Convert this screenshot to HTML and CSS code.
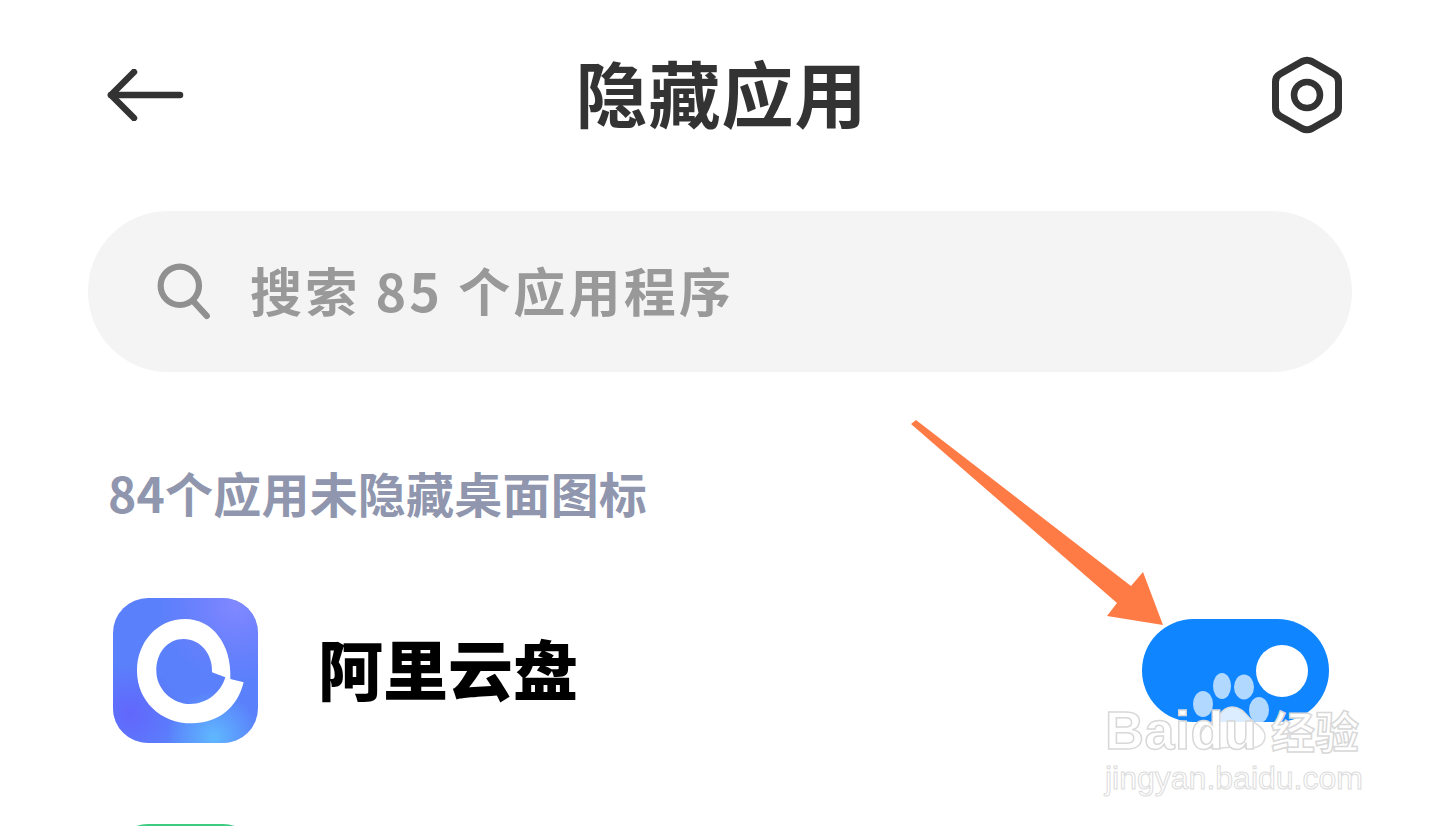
FILE: index.html
```html
<!DOCTYPE html>
<html lang="zh-CN">
<head>
  <meta charset="UTF-8" />
  <meta name="viewport" content="width=device-width, initial-scale=1.0" />
  <title>隐藏应用</title>
  <link rel="stylesheet" href="styles.css">
</head>
<body>
  <div class="page">
    <!-- Header -->
    <header class="header">
      <svg class="icon-back" viewBox="0 0 80 52" fill="none" stroke="#333" stroke-width="6.5" stroke-linecap="round" stroke-linejoin="round">
        <path d="M28 3 L5 26 L28 49"/>
        <path d="M5 26 H74"/>
      </svg>
      <h1 class="title">隐藏应用</h1>
      <svg class="icon-settings" viewBox="0 0 72 78" fill="none" stroke="#333" stroke-width="7" stroke-linejoin="round">
        <path d="M31 5.5 Q36 3 41 5.5 L63 18 Q67.500 20.500 67.500 26 V52 Q67.500 57.500 63 60 L41 72.500 Q36 75 31 72.500 L9 60 Q4.500 57.500 4.500 52 V26 Q4.500 20.500 9 18 Z"/>
        <circle cx="36" cy="39" r="13" stroke-width="6.500"/>
      </svg>
    </header>

    <!-- Search -->
    <div class="search">
      <svg class="icon-search" viewBox="0 0 54 56" fill="none" stroke="#909090" stroke-width="6" stroke-linecap="round">
        <circle cx="22" cy="23" r="18.500"/>
        <path d="M36 39 L48 52"/>
      </svg>
      <span class="search-text">搜索 85 个应用程序</span>
    </div>

    <p class="section-label">84个应用未隐藏桌面图标</p>

    <!-- App list -->
    <ul class="app-list">
      <li class="app-row">
        <svg class="app-icon" viewBox="68 52 435 435">
          <defs>
            <radialGradient id="iconCorner" gradientUnits="userSpaceOnUse" cx="440" cy="70" r="240">
              <stop offset="0" stop-color="#8189ff"/>
              <stop offset="1" stop-color="#7a7dff" stop-opacity="0"/>
            </radialGradient>
            <radialGradient id="iconLeft" gradientUnits="userSpaceOnUse" cx="120" cy="400" r="150">
              <stop offset="0" stop-color="#6266fc"/>
              <stop offset="1" stop-color="#6266fc" stop-opacity="0"/>
            </radialGradient>
            <radialGradient id="iconBottom" gradientUnits="userSpaceOnUse" cx="370" cy="470" r="140">
              <stop offset="0" stop-color="#5fb8ff"/>
              <stop offset="1" stop-color="#5fb8ff" stop-opacity="0"/>
            </radialGradient>
          </defs>
          <rect x="68" y="52" width="435" height="435" rx="105" fill="#5a80fb"/>
          <rect x="68" y="52" width="435" height="435" rx="105" fill="url(#iconCorner)"/>
          <rect x="68" y="52" width="435" height="435" rx="105" fill="url(#iconLeft)"/>
          <rect x="68" y="52" width="435" height="435" rx="105" fill="url(#iconBottom)"/>
          <path fill="#fff" fill-rule="evenodd" d="M420 295 C425 190 365 115 285 115 C200 115 140 185 140 270 C140 360 210 428 305 428 C380 428 440 385 460 305 Z M365 275 C368 220 330 175 280 175 C232 175 198 215 198 270 C198 325 245 370 300 370 C350 370 392 335 405 290 Z"/>
        </svg>
        <span class="app-name">阿里云盘</span>
        <div class="toggle"><span class="toggle-knob"></span></div>
      </li>
      <li class="app-row">
        <div class="app-icon app-icon-green"></div>
      </li>
    </ul>
  </div>

  <!-- Annotation arrow -->
  <svg class="arrow" viewBox="0 0 1440 826">
    <polygon fill="#ff7b45" points="911,424 916,420 1131,586 1143,572 1163,625 1107,616 1117,603"/>
  </svg>

  <!-- Watermark -->
  <div class="watermark">
    <svg class="wm-paw" viewBox="0 0 90 80">
      <ellipse cx="10" cy="25" rx="10" ry="13"/>
      <ellipse cx="29" cy="7" rx="9" ry="13"/>
      <ellipse cx="51" cy="8" rx="10" ry="12.500"/>
      <ellipse cx="66" cy="31" rx="10" ry="13"/>
      <path class="wm-pad" d="M39 28 C50 28 54 38 62 44 C72 50 75 58 69 65 C62 72 50 67 39 68 C28 69 16 72 10 64 C4 56 10 48 19 43 C27 38 29 28 39 28 Z"/>
    </svg>
    <div class="wm-top">
      <span class="wm-baidu">Baidu</span>
      <span class="wm-cn">经验</span>
    </div>
    <div class="wm-url">jingyan.baidu.com</div>
  </div>
</body>
</html>
```

FILE: styles.css
```css
/* Base styling */
html, body {
  margin: 0;
  padding: 0;
  height: 826px;
  overflow: hidden;
  background: #fff;
}
body {
  position: relative;
  font-family: "Noto Sans CJK SC", "Noto Sans", sans-serif;
}
.page {
  padding: 0 88px;
  height: 826px;
  overflow: hidden;
}

/* Header */
.header {
  display: flex;
  align-items: center;
  justify-content: space-between;
  height: 190px;
  padding: 0 9px 0 18px;
}
.icon-back {
  display: block;
  width: 80px;
  height: 52px;
}
.title {
  margin: -8px 0 0 -14px;
  font-size: 72px;
  line-height: 80px;
  letter-spacing: 1px;
  font-weight: 700;
  color: #333;
}
.icon-settings {
  display: block;
  width: 72px;
  height: 78px;
}

/* Search */
.search {
  display: flex;
  align-items: center;
  height: 161px;
  margin-top: 21px;
  padding-left: 69px;
  background: #f4f4f4;
  border-radius: 80px;
}
.icon-search {
  width: 56px;
  height: 58px;
  margin: -2px 37px 0 0;
}
.search-text {
  font-size: 52px;
  line-height: 70px;
  margin-top: -3px;
  letter-spacing: 3.200px;
  font-weight: 700;
  color: #999;
  white-space: pre;
}

/* List */
.section-label {
  margin: 89px 0 0 20px;
  font-size: 48px;
  line-height: 62px;
  letter-spacing: 0.2px;
  font-weight: 700;
  color: #8f96ae;
}
.app-list {
  list-style: none;
  margin: 75px 0 0;
  padding: 0;
}
.app-row {
  display: flex;
  align-items: center;
  margin-bottom: 81px;
  padding: 0 23px 0 25px;
}
.app-icon {
  display: block;
  width: 145px;
  height: 145px;
  flex-shrink: 0;
}
.app-icon-green {
  background: #3ccb7f;
  border-radius: 35px;
}
.app-name {
  flex: 1;
  margin: -7px 0 0 60px;
  font-size: 65px;
  line-height: 80px;
  font-weight: 900;
  color: #000;
}
.toggle {
  display: flex;
  align-items: center;
  justify-content: flex-end;
  width: 187px;
  height: 103px;
  padding-right: 21px;
  box-sizing: border-box;
  background: #0f85ff;
  border-radius: 52px;
}
.toggle-knob {
  width: 52px;
  height: 52px;
  background: #fff;
  border-radius: 50%;
}

/* Annotation arrow */
.arrow {
  position: absolute;
  left: 0;
  top: 0;
  width: 1440px;
  height: 826px;
  pointer-events: none;
}

/* Watermark */
.watermark {
  position: absolute;
  left: 1105px;
  top: 702px;
  width: 254px;
  color: #fff;
}
.wm-paw {
  position: absolute;
  left: 88px;
  top: -23px;
  width: 90px;
  height: 80px;
  overflow: visible;
  fill: rgba(255, 255, 255, 0.68);
}
.wm-pad {
  fill: rgba(255, 255, 255, 0.85);
  stroke: #dcdcdc;
  stroke-width: 1.500;
}
.wm-top {
  position: relative;
  display: flex;
  align-items: center;
  justify-content: space-between;
  height: 56px;
}
.wm-baidu {
  font-family: "Liberation Sans", sans-serif;
  font-size: 54px;
  line-height: 56px;
  font-weight: 700;
  letter-spacing: 0.5px;
  -webkit-text-stroke: 1.500px #d8d8d8;
}
.wm-cn {
  font-size: 44px;
  line-height: 56px;
  font-weight: 700;
  -webkit-text-stroke: 1.500px #d8d8d8;
}
.wm-url {
  position: relative;
  margin-top: 2px;
  font-family: "Liberation Sans", sans-serif;
  font-size: 32px;
  line-height: 36px;
  font-weight: 400;
  white-space: nowrap;
  -webkit-text-stroke: 1px #dcdcdc;
}
```
